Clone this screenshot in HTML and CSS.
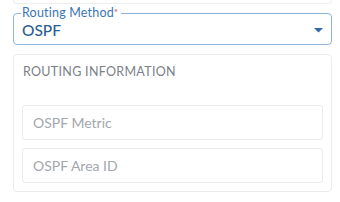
FILE: index.html
```html
<!DOCTYPE html>
<html lang="en">
<head>
<meta charset="UTF-8">
<meta name="viewport" content="width=device-width, initial-scale=1.0">
<title>Routing</title>
<link rel="stylesheet" href="styles.css">
</head>
<body>

<div class="page">
  <div class="prev-card"></div>

  <fieldset class="select-field">
    <legend>Routing Method<span class="req">*</span></legend>
    <div class="select-row">
      <span class="select-value">OSPF</span>
      <svg class="caret" width="9" height="5" viewBox="0 0 9 5"><path d="M0 0 L9 0 L4.5 4.5 Z" fill="#2f6aa6"/></svg>
    </div>
  </fieldset>

  <div class="card">
    <div class="card-title">ROUTING INFORMATION</div>
    <div class="inputs">
      <input class="text-input" type="text" placeholder="OSPF Metric">
      <input class="text-input" type="text" placeholder="OSPF Area ID">
    </div>
  </div>
</div>

</body>
</html>
```

FILE: styles.css
```css
body {
  font-family: Lato, "Open Sans", sans-serif;
  margin: 0;
  padding: 0;
  background-color: #fff;
}
.page {
  padding: 0 8px 0 13px;
}
.prev-card {
  height: 3px;
  border: 1px solid #eeeeee;
  border-top: none;
  border-radius: 0 0 4px 4px;
}
.select-field {
  margin: 2px 0 0 0;
  padding: 0 8px 0 8px;
  border: 1px solid #8fb3dc;
  border-radius: 4px;
  height: 39px;
  box-sizing: border-box;
}
.select-field legend {
  padding: 0 3px 0 1px;
  margin-left: -1px;
  font-size: 12.5px;
  color: #3a76b4;
  line-height: 14px;
  letter-spacing: 0.2px;
}
.req {
  color: #d9364a;
  font-size: 9px;
  vertical-align: top;
}
.select-row {
  display: flex;
  align-items: center;
  justify-content: space-between;
  height: 22px;
  margin-top: -1px;
}
.select-value {
  font-size: 15.5px;
  font-weight: 500;
  color: #2c5e93;
}
.card {
  margin-top: 9px;
  border: 1px solid #ececec;
  border-radius: 4px;
  padding: 0 8px 8px 8px;
}
.card-title {
  font-size: 12.5px;
  color: #7b8089;
  height: 50px;
  line-height: 34px;
  padding-left: 1px;
  letter-spacing: 0.3px;
}
.inputs {
  display: flex;
  flex-direction: column;
  gap: 8px;
}
.text-input {
  height: 35px;
  box-sizing: border-box;
  border: 1px solid #ebebeb;
  border-radius: 3px;
  padding: 0 10px;
  font-family: inherit;
  font-size: 14px;
  outline: none;
}
.text-input::placeholder {
  color: #a3a7ae;
}
```
